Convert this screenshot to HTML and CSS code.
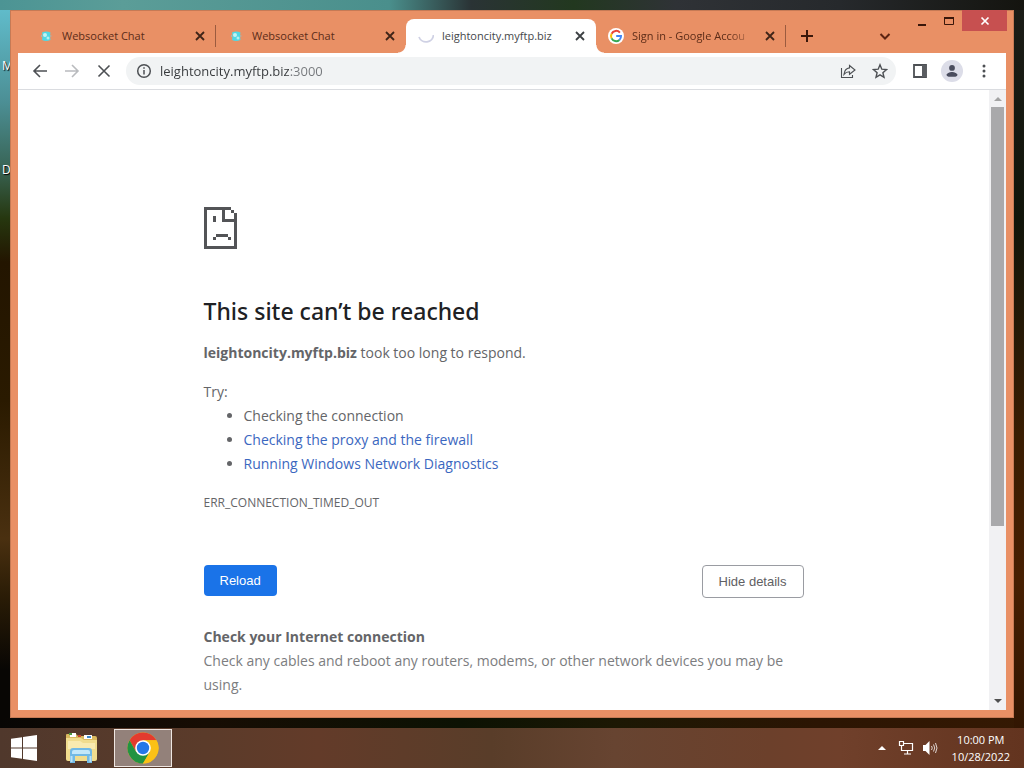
FILE: index.html
```html
<!DOCTYPE html>
<html lang="en">
<head>
<meta charset="utf-8">
<title>leightoncity.myftp.biz</title>
<link rel="stylesheet" href="styles.css">
</head>
<body class="screen">
<main class="desktop">
  <span class="shortcut shortcut-first">M</span>
  <span class="shortcut shortcut-second">D</span>

  <section class="window">
    <header class="titlebar">
      <div class="tabs">
        <div class="tab">
          <svg class="favicon" viewBox="0 0 16 16"><path d="M4 4.500Q8 2.500 12.500 4.500L12 8l.5 4Q8 13.800 4 12l.5-4z" fill="#4fd8e4"/><circle cx="7" cy="7" r="2" fill="#c4f3f2"/><circle cx="10" cy="10" r="1.500" fill="#b5eff0"/><path d="M3.500 7v2M12.800 7v2" stroke="#a8b6b0"/></svg>
          <span class="tab-title">Websocket Chat</span>
          <button class="icon-button tab-close" aria-label="Close tab"><svg viewBox="0 0 16 16"><path d="M4 4l8 8M12 4l-8 8"/></svg></button>
        </div>
        <div class="tab">
          <svg class="favicon" viewBox="0 0 16 16"><path d="M4 4.500Q8 2.500 12.500 4.500L12 8l.5 4Q8 13.800 4 12l.5-4z" fill="#4fd8e4"/><circle cx="7" cy="7" r="2" fill="#c4f3f2"/><circle cx="10" cy="10" r="1.500" fill="#b5eff0"/><path d="M3.500 7v2M12.800 7v2" stroke="#a8b6b0"/></svg>
          <span class="tab-title">Websocket Chat</span>
          <button class="icon-button tab-close" aria-label="Close tab"><svg viewBox="0 0 16 16"><path d="M4 4l8 8M12 4l-8 8"/></svg></button>
        </div>
        <div class="tab tab-active">
          <svg class="favicon" viewBox="0 0 16 16"><path d="M1 9A7.500 7.500 0 0 0 15.500 7" fill="none" stroke="#cfd1e4" stroke-width="1.800"/></svg>
          <span class="tab-title">leightoncity.myftp.biz</span>
          <button class="icon-button tab-close" aria-label="Close tab"><svg viewBox="0 0 16 16"><path d="M4 4l8 8M12 4l-8 8"/></svg></button>
        </div>
        <div class="tab">
          <svg class="favicon" viewBox="0 0 16 16"><circle cx="8" cy="8" r="8" fill="#fff"/><g fill="none" stroke-width="2"><path d="M11.900 4.600A5 5 0 0 0 3.600 5.700" stroke="#ea4335"/><path d="M3.600 5.700a5 5 0 0 0 0 4.700" stroke="#fbbc05"/><path d="M3.600 10.400a5 5 0 0 0 7.800 1.500" stroke="#34a853"/><path d="M11.400 11.900A5 5 0 0 0 13 8.100H8.200" stroke="#4285f4"/></g></svg>
          <span class="tab-title tab-title-faded">Sign in - Google Accou</span>
          <button class="icon-button tab-close" aria-label="Close tab"><svg viewBox="0 0 16 16"><path d="M4 4l8 8M12 4l-8 8"/></svg></button>
        </div>
        <button class="icon-button new-tab" aria-label="New tab"><svg viewBox="0 0 16 16"><path d="M8 2v12M2 8h12"/></svg></button>
      </div>
      <button class="icon-button tab-search" aria-label="Search tabs"><svg viewBox="0 0 16 16"><path d="M3.500 6L8 10.500 12.500 6"/></svg></button>
      <div class="window-controls">
        <button class="icon-button control" aria-label="Minimize"><svg viewBox="0 0 16 16"><path d="M4 12h8" stroke-width="2"/></svg></button>
        <button class="icon-button control" aria-label="Maximize"><svg viewBox="0 0 16 16"><path d="M3.500 5.500h9v6h-9z" stroke-width="1"/><path d="M3 5h10" stroke-width="2"/></svg></button>
        <button class="icon-button control control-close" aria-label="Close"><svg viewBox="0 0 16 16"><path d="M4.500 4.500l7 7M11.500 4.500l-7 7" stroke-width="1.700"/></svg></button>
      </div>
    </header>

    <nav class="toolbar">
      <button class="icon-button tool" aria-label="Back"><svg viewBox="0 0 16 16"><path d="M15 8H2M8 2L2 8l6 6"/></svg></button>
      <button class="icon-button tool tool-disabled" aria-label="Forward" disabled><svg viewBox="0 0 16 16"><path d="M1 8h13M8 2l6 6-6 6"/></svg></button>
      <button class="icon-button tool" aria-label="Stop"><svg viewBox="0 0 16 16"><path d="M2.500 2.500l11 11M13.500 2.500l-11 11"/></svg></button>
      <form class="address">
        <button type="button" class="icon-button address-icon" aria-label="View site information"><svg viewBox="0 0 16 16"><circle cx="8" cy="8" r="6.300" stroke-width="1.500"/><path d="M8 7v4.500M8 4.300v1.500" stroke-width="1.500"/></svg></button>
        <input class="address-input" type="text" aria-label="Address" value="leightoncity.myftp.biz:3000">
        <button type="button" class="icon-button address-icon" aria-label="Share"><svg viewBox="0 0 16 16"><path d="M1.500 5v9.500h11V12M9.500 2.500L15 7l-5.500 4.300V8.800C7 8.800 5.300 9.600 4 11.300 4.400 8 6.200 5.300 9.500 4.900z" stroke-width="1.100"/></svg></button>
        <button type="button" class="icon-button address-icon" aria-label="Bookmark"><svg viewBox="0 0 16 16"><path d="M8 1.800l1.800 4.400 4.700.4-3.600 3.100 1.100 4.600L8 11.800l-4 2.500 1.100-4.600-3.600-3.100 4.700-.4z" stroke-width="1.400"/></svg></button>
      </form>
      <button class="icon-button tool" aria-label="Side panel"><svg viewBox="0 0 16 16"><path d="M2 2h12v12H2z" stroke-width="1.800"/><path d="M10 2h4v12h-4z" fill="#5a5d61" stroke="none"/></svg></button>
      <button class="icon-button profile" aria-label="Profile"><svg viewBox="0 0 16 16"><g fill="#4a4d5e" stroke="none"><circle cx="8" cy="4.500" r="3.300"/><path d="M1.500 14.500V13C1.500 10.500 5.500 9 8 9s6.500 1.500 6.500 4v1.500z"/></g></svg></button>
      <button class="icon-button tool" aria-label="Menu"><svg viewBox="0 0 16 16"><g fill="#4d5054" stroke="none"><circle cx="8" cy="3" r="1.500"/><circle cx="8" cy="8" r="1.500"/><circle cx="8" cy="13" r="1.500"/></g></svg></button>
    </nav>

    <div class="viewport">
      <article class="page">
        <svg class="sad-page" viewBox="0 0 11 14" shape-rendering="crispEdges"><path fill="#535457" d="M0 0h9v1h1v1h1v12H0zM1 1v12h9V5H6V1zM7 1v3h3V2H9V1zM3 3h1v2H3zM4 9h4v1H4zM3 10h1v1H3zM8 10h1v1H8z" fill-rule="evenodd"/></svg>
        <h1 class="headline">This site can’t be reached</h1>
        <p class="summary"><strong>leightoncity.myftp.biz</strong> took too long to respond.</p>
        <div class="suggestions">
          <p class="line">Try:</p>
          <ul class="suggestion-list">
            <li>Checking the connection</li>
            <li><a class="link" href="#details">Checking the proxy and the firewall</a></li>
            <li><a class="link" href="#diagnostics">Running Windows Network Diagnostics</a></li>
          </ul>
        </div>
        <p class="error-code">ERR_CONNECTION_TIMED_OUT</p>
        <div class="actions">
          <button class="button button-primary">Reload</button>
          <button class="button button-outline">Hide details</button>
        </div>
        <section class="details" id="details">
          <h2 class="details-title">Check your Internet connection</h2>
          <p class="line">Check any cables and reboot any routers, modems, or other network devices you may be using.</p>
        </section>
      </article>
      <div class="scrollbar">
        <svg class="scroll-arrow" viewBox="0 0 17 17"><path d="M5 11l4-4 4 4z" fill="#a3a3a3"/></svg>
        <div class="scroll-track"><div class="scroll-thumb"></div></div>
        <svg class="scroll-arrow" viewBox="0 0 17 17"><path d="M5 6h8l-4 4z" fill="#505050"/></svg>
      </div>
    </div>
  </section>
</main>

<footer class="taskbar">
  <button class="icon-button start" aria-label="Start"><svg viewBox="0 0 26 26"><path fill="#fff" d="M0 3.800l11-1.600v10.300H0zM12 2l14-2v12.500H12zM0 13.500h11v10.300L0 22.200zM12 13.500h14V26l-14-2z"/></svg></button>
  <button class="icon-button task" aria-label="File Explorer"><svg viewBox="0 0 32 32"><path d="M1 3q0-1 1-1h9l2 2h17q2 0 2 2v20q0 2-2 2H3q-2 0-2-2z" fill="#d9b95f"/><path d="M5 1h6v4H5zM19 3h8v4h-8z" fill="#fff"/><path d="M4 1h3v2H4z" fill="#4d9b42"/><path d="M13 3h3v2h-3z" fill="#c9472f"/><path d="M22 4h4v2h-4z" fill="#3d88c7"/><path d="M1 6h15l3 2h13v19q0 2-2 2H3q-2 0-2-2z" fill="#f0dc8e"/><path d="M3 9h12l3 2h12v6H3z" fill="#f8eab0"/><path d="M5 31V19q0-3 3-3h16q3 0 3 3v12h-5v-7H10v7z" fill="#71b9e5"/><path d="M7 22v-2q0-2 2-2h14q2 0 2 2v2z" fill="#c2e7fa"/><path d="M6.500 30v-6M25.500 30v-6" stroke="#b9e2f7"/></svg></button>
  <button class="icon-button task task-active" aria-label="Google Chrome"><svg viewBox="0 0 32 32"><circle cx="16" cy="16" r="15.500" fill="#fbc116"/><path d="M2.600 8.200A15.500 15.500 0 0 1 29.400 8.200H16L9.200 20z" fill="#e33b2e"/><path d="M2.600 8.200a15.500 15.500 0 0 0 13.400 23.300L22.800 20H9.200z" fill="#229342"/><path d="M29.400 8.200A15.500 15.500 0 0 1 16 31.500L22.800 20 16 8.200z" fill="#fbc116"/><circle cx="16" cy="16" r="7.800" fill="#fff"/><circle cx="16" cy="16" r="6.200" fill="#2678e8"/></svg></button>
  <div class="tray">
    <button class="icon-button tray-arrow" aria-label="Show hidden icons"><svg viewBox="0 0 16 16"><path d="M4 10l4-4 4 4z" fill="#fff"/></svg></button>
    <button class="icon-button tray-item" aria-label="Network"><svg viewBox="0 0 16 16"><path d="M6 3.500h8.500v7H5M9.500 11v3M6 14h7M1.500 1.500h4v4h-4zM3.500 5.500v5H5" fill="none" stroke="#fff" stroke-width="1.200"/></svg></button>
    <button class="icon-button tray-item" aria-label="Volume"><svg viewBox="0 0 16 16"><path d="M1 5h2.500l4-4v14l-4-4H1z" fill="#fff"/><path d="M9.500 6q1.500 2 0 4M11.500 4.500q2.500 3.500 0 7M13.500 3q3 5 0 10" fill="none" stroke="#fff" stroke-width=".8"/></svg></button>
    <time class="clock" datetime="2022-10-28T22:00"><span>10:00 PM</span><span>10/28/2022</span></time>
  </div>
</footer>
</body>
</html>
```

FILE: styles.css
```css
* {
  box-sizing: border-box;
}

.screen {
  margin: 0;
  height: 100vh;
  display: flex;
  flex-direction: column;
  overflow: hidden;
  background: #150c02;
  font-family: "Open Sans", "Noto Sans", sans-serif;
  font-size: 14px;
}

.desktop {
  position: relative;
  flex: 1;
  min-height: 0;
  padding: 10px;
  display: flex;
  background:
    linear-gradient(90deg, #4c9494 0, #5b9d98 12%, #4a8f8c 38%, #2a3335 46%, #22381f 56%, #2f3236 66%, #26292c 82%, #14140f 100%) 0 0 / 100% 10px no-repeat,
    linear-gradient(180deg, #1c1d18 0, #11150a 30%, #3a1d02 60%, #471f02 80%, #321602 100%) 100% 0 / 10px 100% no-repeat,
    linear-gradient(90deg, #080604 0, #170d04 20%, #0c1203 45%, #1c1804 60%, #2c1503 80%, #351903 100%) 0 100% / 100% 10px no-repeat,
    linear-gradient(180deg, #62c0d0 0, #4c8f95 14%, #3b6a5e 22%, #26370f 30%, #231500 36%, #2a1a00 55%, #4a3010 74%, #2a1c06 82%, #080604 92%) 0 0 / 10px 100% no-repeat;
}

.shortcut {
  position: absolute;
  left: 2px;
  color: #fff;
  font-size: 12px;
  line-height: 16px;
  text-shadow: 1px 1px 1px #000;
}

.shortcut-first {
  top: 58px;
}

.shortcut-second {
  top: 162px;
}

.window {
  position: relative;
  flex: 1;
  min-width: 0;
  display: flex;
  flex-direction: column;
  padding: 0 8px 8px;
  background: #e99065;
  box-shadow: inset 0 0 0 1px #c67a55;
}

.icon-button {
  display: flex;
  align-items: center;
  justify-content: center;
  flex: none;
  margin: 0;
  padding: 0;
  border: 0;
  background: none;
}

.icon-button svg {
  display: block;
  width: 16px;
  height: 16px;
  fill: none;
  stroke: #4d5054;
  stroke-width: 2;
}

.titlebar {
  display: flex;
  align-items: flex-end;
  height: 43px;
  padding-left: 8px;
}

.tabs {
  display: flex;
  flex: 1;
  min-width: 0;
  height: 34px;
}

.tab {
  position: relative;
  display: flex;
  align-items: center;
  flex: 0 1 190px;
  min-width: 0;
  gap: 8px;
  padding: 0 7px 0 12px;
  border-right: 1px solid transparent;
  color: #5c2c18;
  font-size: 11px;
}

.tab:first-child,
.tab:nth-child(4) {
  border-image: linear-gradient(transparent 7px, #9b5b3f 7px, #9b5b3f 27px, transparent 27px) 1;
}

.tab-active {
  background: #fff;
  border-radius: 8px 8px 0 0;
  color: #45474a;
}

.tab-active::before,
.tab-active::after {
  content: "";
  position: absolute;
  bottom: 0;
  width: 8px;
  height: 8px;
}

.tab-active::before {
  left: -8px;
  background: radial-gradient(circle at 0 0, transparent 7px, #fff 8px);
}

.tab-active::after {
  right: -9px;
  background: radial-gradient(circle at 100% 0, transparent 7px, #fff 8px);
}

.favicon {
  flex: none;
  width: 16px;
  height: 16px;
}

.tab-title {
  flex: 1;
  min-width: 0;
  overflow: hidden;
  line-height: 16px;
  white-space: nowrap;
}

.tab-title-faded {
  mask-image: linear-gradient(90deg, #000 80%, transparent);
}

.tab-close svg {
  stroke: #3f2418;
  stroke-width: 1.8;
}

.tab-active .tab-close svg {
  stroke: #3c4043;
}

.new-tab {
  width: 42px;
}

.new-tab svg {
  stroke: #3a170a;
}

.tab-search {
  width: 28px;
  height: 34px;
  margin-right: 107px;
}

.tab-search svg {
  stroke: #5c2412;
}

.window-controls {
  position: absolute;
  top: 0;
  right: 7px;
  display: flex;
}

.control {
  width: 27px;
  height: 21px;
}

.control svg {
  stroke: #3a170a;
}

.control-close {
  width: 45px;
  background: #c75050;
}

.control-close svg {
  stroke: #fff;
}

.toolbar {
  display: flex;
  align-items: center;
  height: 37px;
  padding: 0 6px;
  background: #fff;
  border-bottom: 1px solid #dadce0;
}

.tool {
  width: 32px;
  height: 28px;
}

.tool svg {
  stroke-width: 1.6;
}

.tool-disabled svg {
  stroke: #b9bbbe;
}

.address {
  flex: 1;
  min-width: 0;
  display: flex;
  align-items: center;
  height: 28px;
  margin: 0 8px 0 6px;
  padding: 0 8px 0 10px;
  gap: 16px;
  border-radius: 14px;
  background: #f1f3f4;
}

.address-input {
  flex: 1;
  min-width: 0;
  height: 24px;
  margin-left: -8px;
  padding: 0;
  border: 0;
  outline: 0;
  background: linear-gradient(90deg, #36393c 130px, #74777b 130px);
  background-clip: text;
  color: #36393c;
  -webkit-text-fill-color: transparent;
  font-family: inherit;
  font-size: 13px;
}

.profile {
  width: 32px;
  height: 22px;
}

.profile svg {
  width: 22px;
  height: 22px;
  padding: 4px;
  border-radius: 50%;
  background: #dcdde8;
}

.viewport {
  flex: 1;
  min-height: 0;
  display: flex;
  overflow: hidden;
  background: #fff;
}

.page {
  width: 100%;
  max-width: 600px;
  margin: 0 auto;
  padding-top: 117px;
  color: #646568;
  line-height: 24px;
}

.sad-page {
  display: block;
  width: 33px;
  height: 42px;
}

.headline {
  margin: 48px 0 15px;
  color: #202124;
  font-family: "Noto Sans", "Open Sans", sans-serif;
  font-size: 23px;
  font-weight: 500;
  line-height: 29px;
}

.summary {
  margin: 0 0 15px;
}

.line {
  margin: 0;
}

.suggestion-list {
  margin: 0;
  padding-left: 40px;
}

.link {
  color: #3b67c0;
  text-decoration: none;
}

.error-code {
  margin: 15px 0 50px;
  font-size: 12px;
}

.actions {
  display: flex;
  align-items: flex-start;
  justify-content: space-between;
}

.button {
  padding: 8px 16px;
  border: 0;
  border-radius: 4px;
  font-family: "Liberation Sans", sans-serif;
  font-size: 13px;
  line-height: 15px;
}

.button-primary {
  background: #1a73e8;
  color: #fff;
}

.button-outline {
  border: 1px solid #9a9ca2;
  background: #fff;
  color: #5f6063;
}

.details {
  margin-top: 27px;
  color: #7c7d80;
}

.details-title {
  margin: 0;
  color: #646568;
  font-size: 14px;
  font-weight: 700;
}

.scrollbar {
  display: flex;
  flex-direction: column;
  flex: none;
  width: 17px;
  background: #f1f1f3;
}

.scroll-arrow {
  flex: none;
  width: 17px;
  height: 17px;
}

.scroll-track {
  flex: 1;
  padding: 0 2px;
}

.scroll-thumb {
  height: 71.5%;
  background: #a9a9ab;
}

.taskbar {
  display: flex;
  align-items: center;
  flex: none;
  height: 40px;
  padding-left: 6px;
  background: linear-gradient(90deg, #50382c 0, #5b3b2a 20%, #633b29 31%, #593d29 48%, #674431 60%, #6c402b 75%, #70402b 82%, #63341f 100%);
}

.start {
  width: 36px;
  height: 40px;
}

.start svg {
  width: 26px;
  height: 26px;
  stroke: none;
}

.task {
  width: 58px;
  height: 38px;
  margin-left: 10px;
}

.task svg {
  width: 32px;
  height: 32px;
  stroke: none;
}

.task-active {
  margin-left: 4px;
  border: 1px solid #efe6e1;
  background: #93817a;
}

.tray {
  display: flex;
  align-items: center;
  gap: 8px;
  margin-left: auto;
  padding-right: 14px;
}

.tray-arrow svg {
  stroke: none;
}

.tray-item svg {
  stroke: none;
}

.clock {
  display: flex;
  flex-direction: column;
  align-items: center;
  margin-left: 6px;
  color: #fff;
  font-size: 11px;
  line-height: 17px;
}
```
